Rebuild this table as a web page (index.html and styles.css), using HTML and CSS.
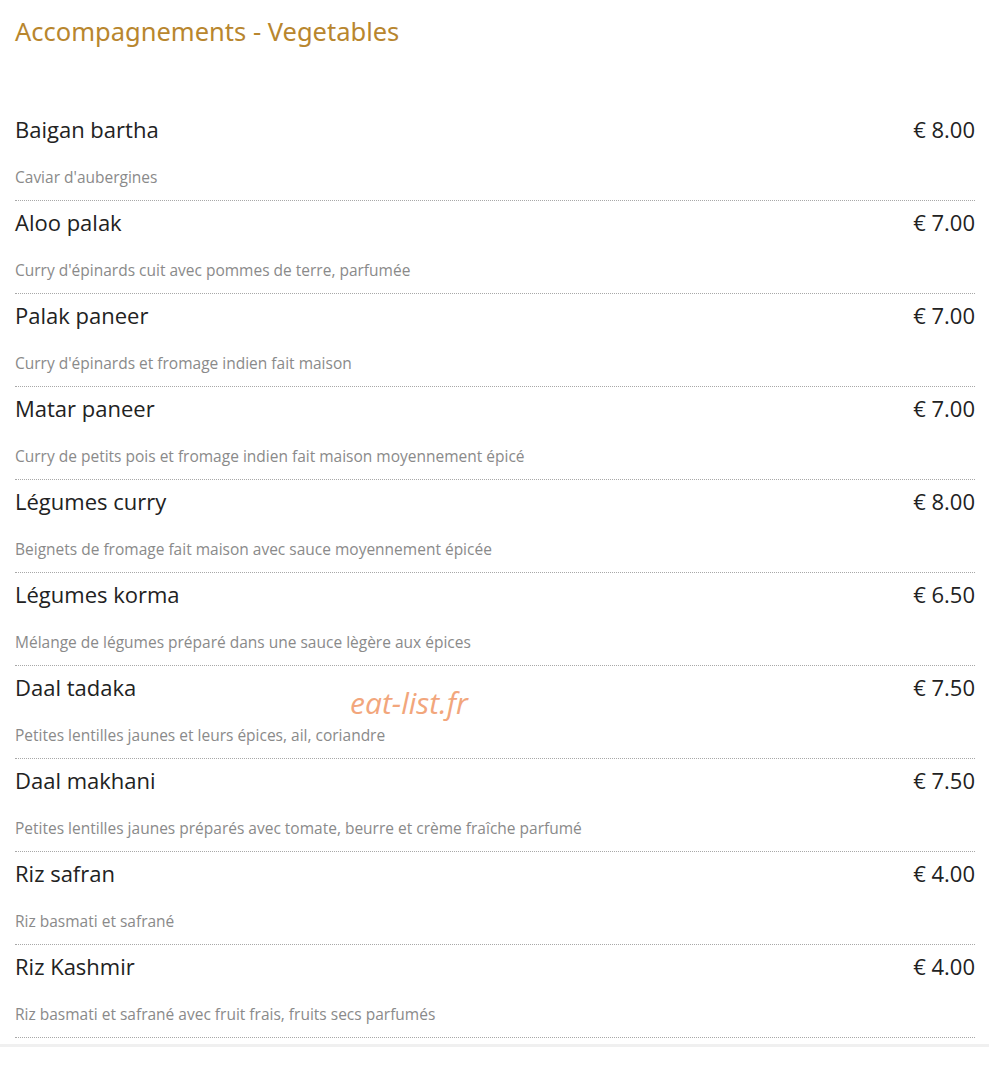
FILE: index.html
```html
<!DOCTYPE html>
<html lang="fr">
<head>
    <meta charset="UTF-8">
    <meta name="viewport" content="width=device-width, initial-scale=1.0">
    <title>Accompagnements - Vegetables</title>
    <link rel="stylesheet" href="styles.css">
</head>
<body>
    <div class="menu">
        <h2 class="menu-title">Accompagnements - Vegetables</h2>

        <div class="menu-list">
            <div class="menu-item">
                <div class="item-head"><span class="item-name">Baigan bartha</span><span class="item-price">€ 8.00</span></div>
                <p class="item-desc">Caviar d'aubergines</p>
            </div>
            <div class="menu-item">
                <div class="item-head"><span class="item-name">Aloo palak</span><span class="item-price">€ 7.00</span></div>
                <p class="item-desc">Curry d'épinards cuit avec pommes de terre, parfumée</p>
            </div>
            <div class="menu-item">
                <div class="item-head"><span class="item-name">Palak paneer</span><span class="item-price">€ 7.00</span></div>
                <p class="item-desc">Curry d'épinards et fromage indien fait maison</p>
            </div>
            <div class="menu-item">
                <div class="item-head"><span class="item-name">Matar paneer</span><span class="item-price">€ 7.00</span></div>
                <p class="item-desc">Curry de petits pois et fromage indien fait maison moyennement épicé</p>
            </div>
            <div class="menu-item">
                <div class="item-head"><span class="item-name">Légumes curry</span><span class="item-price">€ 8.00</span></div>
                <p class="item-desc">Beignets de fromage fait maison avec sauce moyennement épicée</p>
            </div>
            <div class="menu-item">
                <div class="item-head"><span class="item-name">Légumes korma</span><span class="item-price">€ 6.50</span></div>
                <p class="item-desc">Mélange de légumes préparé dans une sauce lègère aux épices</p>
            </div>
            <div class="menu-item">
                <div class="item-head"><span class="item-name">Daal tadaka</span><span class="item-price">€ 7.50</span></div>
                <p class="item-desc">Petites lentilles jaunes et leurs épices, ail, coriandre</p>
            </div>
            <div class="menu-item">
                <div class="item-head"><span class="item-name">Daal makhani</span><span class="item-price">€ 7.50</span></div>
                <p class="item-desc">Petites lentilles jaunes préparés avec tomate, beurre et crème fraîche parfumé</p>
            </div>
            <div class="menu-item">
                <div class="item-head"><span class="item-name">Riz safran</span><span class="item-price">€ 4.00</span></div>
                <p class="item-desc">Riz basmati et safrané</p>
            </div>
            <div class="menu-item">
                <div class="item-head"><span class="item-name">Riz Kashmir</span><span class="item-price">€ 4.00</span></div>
                <p class="item-desc">Riz basmati et safrané avec fruit frais, fruits secs parfumés</p>
            </div>
        </div>
    </div>
    <div class="page-rule"></div>

    <div class="watermark">eat-list.fr</div>
</body>
</html>
```

FILE: styles.css
```css
body {
    margin: 0;
    background-color: #fff;
    font-family: "Open Sans", "Noto Sans", sans-serif;
    color: #222;
}

.menu {
    padding: 0 14px 0 15px;
}

.menu-title {
    margin: 0;
    padding-top: 16px;
    height: 108px;
    box-sizing: border-box;
    font-family: "Noto Sans", sans-serif;
    font-weight: normal;
    font-size: 25.5px;
    line-height: 30px;
    color: #b8862e;
}

.menu-item {
    padding: 6px 0 13px;
    border-bottom: 1px dotted #a8a8a8;
}

.item-head {
    display: flex;
    justify-content: space-between;
    align-items: baseline;
    height: 30px;
    line-height: 30px;
}

.item-name {
    font-size: 22px;
    color: #222;
}

.item-price {
    font-size: 22px;
    color: #222;
}

.item-desc {
    margin: 23px 0 0;
    font-size: 15.5px;
    line-height: 20px;
    color: #8a8a8a;
}

.page-rule {
    margin-top: 6px;
    height: 3px;
    background-color: #f0f0f0;
}

.watermark {
    position: absolute;
    left: 350px;
    top: 682px;
    font-size: 30px;
    font-style: italic;
    color: #f2a67c;
}
```
